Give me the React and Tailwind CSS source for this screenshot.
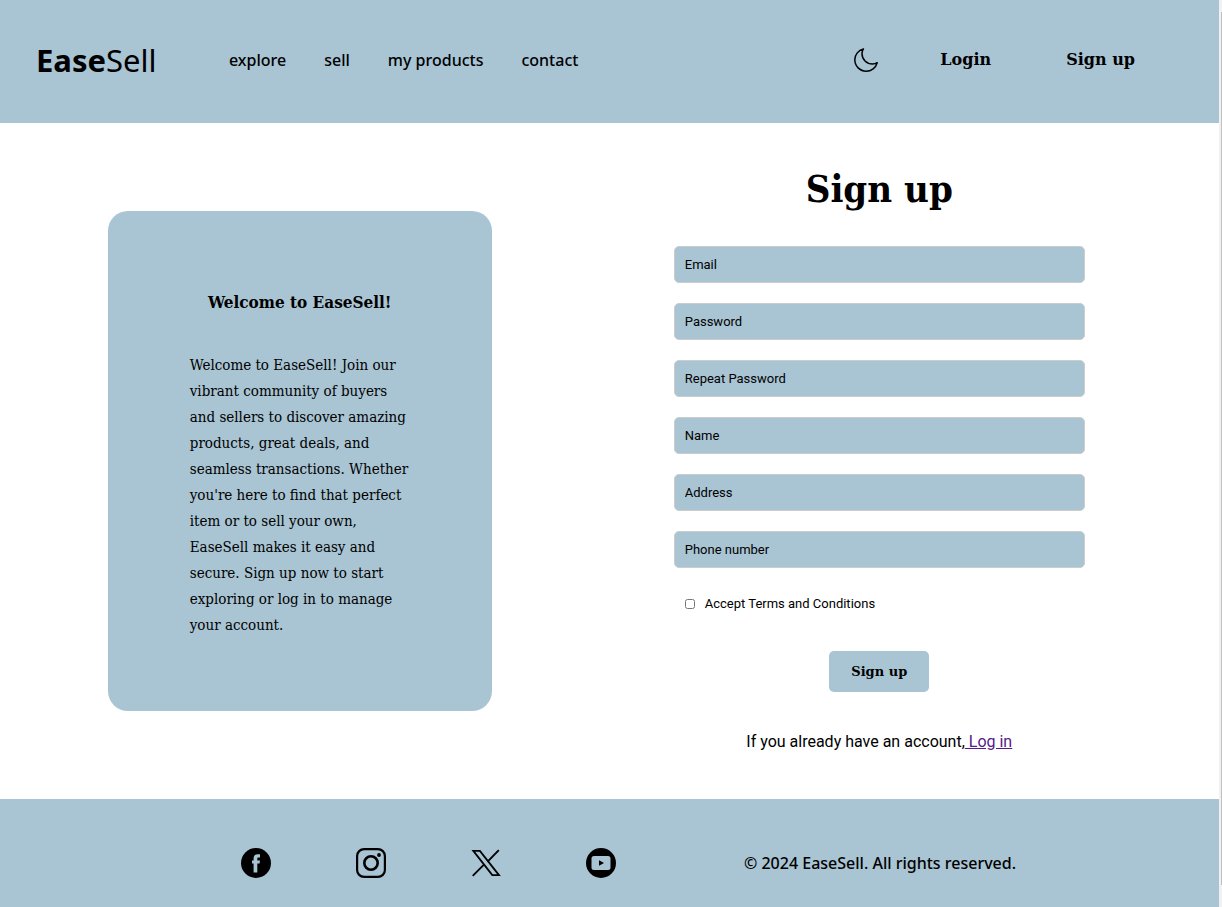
const slab = "font-['DejaVu_Serif_Condensed','DejaVu_Serif',serif]";
const wideSlab = "font-['DejaVu_Serif',serif]";
const sans = "font-['Noto_Sans',sans-serif]";

const navLinks = ["explore", "sell", "my products", "contact"];

const fields = [
  { id: "email", label: "Email", type: "email" },
  { id: "password", label: "Password", type: "password" },
  { id: "repeat-password", label: "Repeat Password", type: "password" },
  { id: "name", label: "Name", type: "text" },
  { id: "address", label: "Address", type: "text" },
  { id: "phone", label: "Phone number", type: "tel" },
];

function MoonIcon() {
  return (
    <svg viewBox="0 0 24 24" className="size-6" fill="none" stroke="black" strokeWidth="1.5" strokeLinejoin="round" aria-hidden="true">
      <path d="M9.4.9C4.500 2.200.8 6.500.8 11.800c0 6.300 5.100 11.400 11.400 11.400 5.200 0 9.700-3.600 11-8.500-1.400.9-3 1.300-4.600 1.300C12.500 16 8 11.500 8 5.600 8 3.900 8.500 2.300 9.400.9Z" />
    </svg>
  );
}

function FacebookIcon() {
  return (
    <svg viewBox="0 0 30 30" className="size-[30px]" aria-hidden="true">
      <circle cx="15" cy="15" r="15" fill="black" />
      <path fill="#a9c4d3" d="M12.600 24.500V15.500H11v-3.100h1.600v-1.900c0-2.700 1.300-4.200 4-4.200H19v3.200h-1.500c-1 0-1.200.4-1.200 1.200v1.700H19l-.4 3.100h-2.300v9Z" />
    </svg>
  );
}

function InstagramIcon() {
  return (
    <svg viewBox="0 0 30 30" className="size-[30px]" fill="none" stroke="black" aria-hidden="true">
      <rect x="1.100" y="1.100" width="27.800" height="27.800" rx="7" strokeWidth="2.200" />
      <circle cx="15" cy="15" r="6.700" strokeWidth="2.600" />
      <circle cx="23" cy="7" r="1.900" fill="black" stroke="none" />
    </svg>
  );
}

function XIcon() {
  return (
    <svg viewBox="0 0 30 30" className="size-[30px]" fill="none" stroke="black" strokeWidth="1.800" aria-hidden="true">
      <path d="M2.300 2.900h6.600L28 27.100h-6.700Z" />
      <path d="M27.800 2.200 16.600 13.700M13 16.600 1.700 27.900" strokeWidth="1.900" />
    </svg>
  );
}

function YoutubeIcon() {
  return (
    <svg viewBox="0 0 30 30" className="size-[30px]" aria-hidden="true">
      <circle cx="15" cy="15" r="15" fill="black" />
      <rect x="5.500" y="8" width="19" height="14" rx="2.500" fill="#a9c4d3" />
      <path d="M13 12.200v5.600l5-2.800Z" fill="black" />
    </svg>
  );
}

const socials = [
  { name: "Facebook", Icon: FacebookIcon },
  { name: "Instagram", Icon: InstagramIcon },
  { name: "X", Icon: XIcon },
  { name: "YouTube", Icon: YoutubeIcon },
];

export default function App() {
  return (
    <div className="flex min-h-screen bg-white text-black">
      <div className="flex min-w-0 grow flex-col">
        <header className={`flex h-[123px] items-center bg-[#a9c4d3] pr-[84px] pb-1 pl-9 ${sans}`}>
          <a href="#" className="w-[193px] text-[31px] leading-10">
            <span className="font-bold">Ease</span>Sell
          </a>
          <nav className="flex gap-[38px] text-base font-medium whitespace-nowrap">
            {navLinks.map((link) => (
              <a key={link} href="#">{link}</a>
            ))}
          </nav>
          <button type="button" aria-label="Toggle dark mode" className="ml-auto">
            <MoonIcon />
          </button>
          <div className={`ml-[62px] flex gap-[75px] text-base font-bold whitespace-nowrap ${wideSlab}`}>
            <a href="#">Login</a>
            <a href="#">Sign up</a>
          </div>
        </header>

        <main className="grid grow grid-cols-2 items-center pr-[50px] pl-[10px]">
          <section className={`mx-auto h-[500px] w-[384px] rounded-[20px] bg-[#a9c4d3] px-20 pt-[78px] ${slab}`}>
            <h2 className="text-center text-[17px] leading-[26px] font-bold whitespace-nowrap">Welcome to EaseSell!</h2>
            <p className="mt-[37px] pl-[2px] text-[15px] leading-[26px]">
              Welcome to EaseSell! Join our vibrant community of buyers and sellers to discover amazing
              products, great deals, and seamless transactions. Whether you're here to find that perfect
              item or to sell your own, EaseSell makes it easy and secure. Sign up now to start exploring
              or log in to manage your account.
            </p>
          </section>

          <form className="mx-auto flex w-[411px] flex-col pb-[7px] font-[Roboto,sans-serif]">
            <h1 className={`text-center text-[38px] leading-[56px] font-bold ${slab}`}>Sign up</h1>
            <div className="mt-[29px] flex flex-col gap-5">
              {fields.map((field) => (
                <input
                  key={field.id}
                  id={field.id}
                  type={field.type}
                  placeholder={field.label}
                  aria-label={field.label}
                  className="h-[37px] w-full rounded-[5px] border border-[#ccc] bg-[#a9c4d3] px-[10px] text-[13px] placeholder:text-black"
                />
              ))}
            </div>
            <div className="mt-[26px] flex items-center gap-[10px] pl-[11px] text-[13px] leading-5">
              <input id="terms" type="checkbox" className="size-[10px]" />
              <label htmlFor="terms">Accept Terms and Conditions</label>
            </div>
            <button type="submit" className={`mx-auto mt-[37px] h-[41px] w-[100px] rounded-[5px] bg-[#a9c4d3] text-[13px] font-bold ${wideSlab}`}>
              Sign up
            </button>
            <p className="mt-[38px] text-center text-base">
              If you already have an account,
              <a href="#" className="text-[#551a8b] underline"> Log in</a>
            </p>
          </form>
        </main>

        <footer className={`flex h-[108px] items-center bg-[#a9c4d3] pt-5 pl-[241px] ${sans}`}>
          <div className="flex gap-[85px]">
            {socials.map(({ name, Icon }) => (
              <a key={name} href="#" aria-label={name}>
                <Icon />
              </a>
            ))}
          </div>
          <p className="ml-32 text-base font-medium whitespace-nowrap">© 2024 EaseSell. All rights reserved.</p>
        </footer>
      </div>
      <div className="w-[3px] shrink-0 bg-[#f1f1f1] pt-3 pl-[2px]">
        <div className="h-[873px] bg-[#c1c1c1]" />
      </div>
    </div>
  );
}
